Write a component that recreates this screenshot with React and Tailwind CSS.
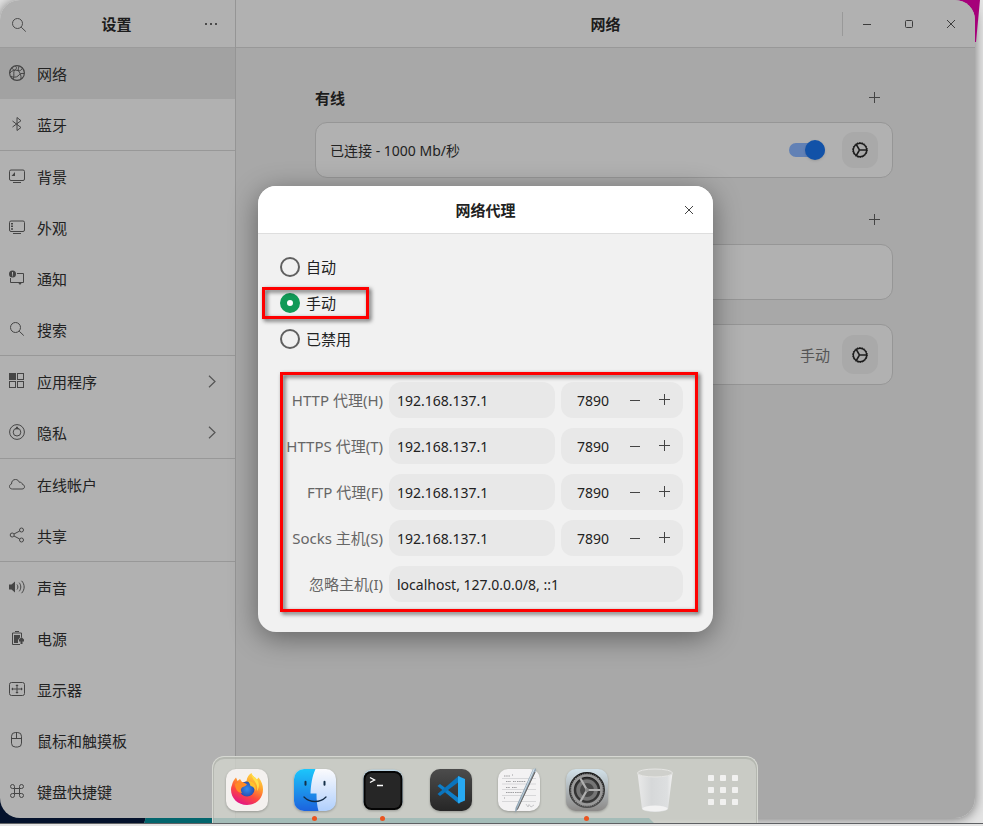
import React from "react";

const FONT = "font-['Noto_Sans','Noto_Sans_CJK_SC',sans-serif]";

function Icon({ children, size = 16, className = "", sw = 1 }) {
  return (
    <svg
      width={size}
      height={size}
      viewBox="0 0 16 16"
      fill="none"
      stroke="currentColor"
      strokeWidth={sw}
      className={"shrink-0 " + className}
      aria-hidden="true"
    >
      {children}
    </svg>
  );
}

const SearchIcon = () => (
  <Icon>
    <circle cx="6.5" cy="6.5" r="5" />
    <path d="M10.2 10.2 14.8 14.6" />
  </Icon>
);

const ICONS = {
  network: (
    <Icon>
      <circle cx="8" cy="8" r="7.4" strokeWidth="1.2" />
      <path d="M6.2 1C8 2 8 4 5.5 5.200C4 7 5.500 10 4.500 13.800M1 8C2.500 5.500 6 4.500 9 5.500C11 7 12.500 11 12 14M10 1.200C9.500 3 9.300 4.500 9 5.500M9 5.500C11 6.500 13 4.500 13.500 3M15 8.500C12 8 10.500 9 9 11C7.500 12.500 4 12.500 2 11.200M3 3C3.500 4.500 4.500 5 5.500 5.200" />
    </Icon>
  ),
  bluetooth: (
    <Icon>
      <path d="M3.500 5 12 11.500 8 14.500V1.500L12 4.700 3.500 11" />
    </Icon>
  ),
  background: (
    <Icon>
      <rect x="0.500" y="2" width="15" height="10.500" rx="1.500" />
      <path d="M4 14.500H12" />
      <path d="M2.500 8 6 4V8Z" fill="currentColor" stroke="none" />
    </Icon>
  ),
  appearance: (
    <Icon>
      <rect x="0.500" y="2" width="15" height="10.500" rx="1.500" />
      <path d="M4 14.500H12" />
      <path d="M2 4H4V5.500H2ZM2 6.600H4V8.100H2ZM2 9.200H4V10.700H2Z" fill="currentColor" stroke="none" />
    </Icon>
  ),
  notify: (
    <Icon>
      <path d="M8 3.500H14.500V12.500H1.500V8" />
      <path d="M9 12.500H13L11 15Z" fill="currentColor" stroke="none" />
      <circle cx="3.500" cy="4" r="3.500" fill="currentColor" stroke="none" />
      <path d="M3.500 2V4.800M3.500 5.300V6.300" stroke="#b1b1b1" />
    </Icon>
  ),
  search: <SearchIcon />,
  apps: (
    <Icon>
      <rect x="0.500" y="0.500" width="6" height="6" fill="currentColor" />
      <rect x="8.500" y="0.500" width="6" height="6" />
      <rect x="0.500" y="8.500" width="6" height="6" />
      <rect x="8.500" y="8.500" width="6" height="6" />
    </Icon>
  ),
  privacy: (
    <Icon>
      <circle cx="8" cy="8" r="7.400" />
      <circle cx="8" cy="8.200" r="3.800" />
      <path d="M6.500 4.800 8 2.800 9.500 4.800Z" fill="currentColor" />
    </Icon>
  ),
  cloud: (
    <Icon>
      <path d="M3.500 13C1.600 13 0.500 12 0.500 10.500C0.500 9 1.500 8.200 2.500 8C2.500 5 4.200 3.500 6.500 3.500C8.500 3.500 9.600 4.600 10.200 6.200C12 6 13.200 7 13.400 8.400C14.700 8.700 15.500 9.500 15.500 10.800C15.500 12.200 14.500 13 13 13Z" />
    </Icon>
  ),
  share: (
    <Icon>
      <circle cx="3.200" cy="8" r="2" />
      <circle cx="12.500" cy="3" r="2" />
      <circle cx="12.500" cy="13" r="2" />
      <path d="M5 7 10.700 4M5 9 10.700 12" />
    </Icon>
  ),
  sound: (
    <Icon>
      <path d="M0 5.500H2.500L6 2.500V13.500L2.500 10.500H0Z" fill="currentColor" stroke="none" />
      <path d="M8 5.500C9.200 7 9.200 9 8 10.500M10.200 3.700C12.300 6.200 12.300 9.800 10.200 12.300M12.600 1.800C16 5.500 16 10.500 12.600 14.200" />
    </Icon>
  ),
  power: (
    <Icon>
      <path d="M11 14.500H3.500V3H12.500V7" />
      <path d="M6 1.500H10" />
      <path d="M5 5H11V7.500L9 10V13H5Z" fill="currentColor" stroke="none" />
      <path d="M10 9.500 12.500 7 15 9.500V11.500H13.500V14H11.500V11.500H10Z" fill="currentColor" stroke="none" />
    </Icon>
  ),
  display: (
    <Icon>
      <rect x="0.500" y="1.500" width="15" height="13" rx="2" />
      <path d="M8 3.500V12.500M2.500 8H13.500M6.800 4.500H9.200M6.800 11.500H9.200M3.500 6.800V9.200M12.500 6.800V9.200" />
    </Icon>
  ),
  mouse: (
    <Icon>
      <rect x="2.500" y="0.500" width="10" height="14.500" rx="3.800" />
      <path d="M2.500 6.500H12.500M7.500 0.500V6.500" />
    </Icon>
  ),
  keyboard: (
    <Icon>
      <path d="M5.500 5.500H10.500V10.500H5.500ZM5.500 5.500H3.500A2 2 0 1 1 5.500 3.500ZM10.500 5.500V3.500A2 2 0 1 1 12.500 5.500ZM10.500 10.500H12.500A2 2 0 1 1 10.500 12.500ZM5.500 10.500V12.500A2 2 0 1 1 3.500 10.500Z" />
    </Icon>
  ),
};

const GROUPS = [
  [
    ["network", "网络"],
    ["bluetooth", "蓝牙"],
  ],
  [
    ["background", "背景"],
    ["appearance", "外观"],
    ["notify", "通知"],
    ["search", "搜索"],
  ],
  [
    ["apps", "应用程序", true],
    ["privacy", "隐私", true],
  ],
  [
    ["cloud", "在线帐户"],
    ["share", "共享"],
  ],
  [
    ["sound", "声音"],
    ["power", "电源"],
    ["display", "显示器"],
    ["mouse", "鼠标和触摸板"],
    ["keyboard", "键盘快捷键"],
  ],
];

function Sidebar() {
  return (
    <aside className="flex w-[236px] shrink-0 flex-col border-r border-[#959595] bg-[#b1b1b1]">
      <div className="flex h-12 items-center border-b border-[#9b9b9b] pt-0.5 pr-2">
        <button aria-label="搜索" className="flex h-9 w-[38px] items-center justify-center text-[#4a4a4a]">
          <SearchIcon />
        </button>
        <h1 className="flex-1 text-center text-[15px] font-bold text-[#1c1c1c]">设置</h1>
        <button aria-label="菜单" className="flex h-9 w-8 items-center justify-center text-[#4a4a4a]">
          <Icon>
            <path d="M2 6H4V8H2ZM7 6H9V8H7ZM12 6H14V8H12Z" fill="currentColor" stroke="none" />
          </Icon>
        </button>
      </div>
      <nav>
        {GROUPS.map((group, g) => (
          <ul key={g} className="border-b border-[#989898] last:border-b-0">
            {group.map(([icon, label, more]) => (
              <li key={icon}>
                <a
                  href="#"
                  className={
                    "flex h-[51px] items-center gap-3 pr-[15px] pl-[9px] text-[15px] text-[#222] " +
                    (icon === "network" ? "bg-[#a2a2a2]" : "")
                  }
                >
                  <span className="pb-0.5 text-[#454545]">{ICONS[icon]}</span>
                  <span className="flex-1 pt-0.5">{label}</span>
                  {more && (
                    <Icon className="text-[#555]" sw={1.2}>
                      <path d="M5 1.700 11 7.500 5 13.300" />
                    </Icon>
                  )}
                </a>
              </li>
            ))}
          </ul>
        ))}
      </nav>
    </aside>
  );
}

function GearButton({ tall }) {
  return (
    <button
      aria-label="选项"
      className={
        "flex w-9 items-center justify-center rounded-xl bg-[#a9a9a9] text-[#1c1c1c] " + (tall ? "h-[39px]" : "h-9")
      }
    >
      <Icon>
        <circle cx="8" cy="8" r="6.700" strokeWidth="1.400" />
        <circle cx="8" cy="8" r="7.400" strokeWidth="1" strokeDasharray="1.400 1.200" />
        <path d="M7.500 8H14.500M7.500 8 4.300 2.500M7.500 8 4.300 13.500" strokeWidth="1.500" />
      </Icon>
    </button>
  );
}

function AddButton() {
  return (
    <button aria-label="添加" className="flex h-9 w-9 items-center justify-center text-[#444]">
      <Icon>
        <path d="M7.500 2V13M2 7.500H13" />
      </Icon>
    </button>
  );
}

function Content() {
  return (
    <section className="flex flex-1 flex-col bg-[#a8a8a8]">
      <header className="grid h-12 grid-cols-[1fr_auto_1fr] items-center border-b border-[#989898] bg-[#b1b1b1]">
        <span />
        <h2 className="pt-0.5 text-[15px] font-bold text-[#1c1c1c]">网络</h2>
        <div className="flex items-center justify-end pr-[3px] text-[#3c3c3c]">
          <span className="mr-[3px] h-6 w-px bg-[#999]" />
          <button aria-label="最小化" className="flex h-9 w-[42px] items-center justify-center">
            <Icon>
              <path d="M4 8.500H12" />
            </Icon>
          </button>
          <button aria-label="最大化" className="flex h-9 w-[42px] items-center justify-center">
            <Icon>
              <rect x="4.500" y="4.500" width="7" height="7" rx="1" />
            </Icon>
          </button>
          <button aria-label="关闭" className="flex h-9 w-[42px] items-center justify-center">
            <Icon>
              <path d="M4 4 12 12M12 4 4 12" />
            </Icon>
          </button>
        </div>
      </header>
      <div className="flex justify-center pt-8 pr-[3px]">
        <div className="w-[578px]">
          <div className="flex h-9 items-center justify-between">
            <h3 className="text-[15px] font-bold text-[#1c1c1c]">有线</h3>
            <AddButton />
          </div>
          <div className="mt-1.5 flex h-14 items-center rounded-xl border border-[#969696] bg-[#b1b1b1] px-3.5">
            <label htmlFor="wired" className="flex-1 text-[14px] text-[#222]">
              已连接 - 1000 Mb/秒
            </label>
            <input
              id="wired"
              type="checkbox"
              role="switch"
              defaultChecked
              className="relative mr-[17px] h-5 w-9 appearance-none before:absolute before:top-[3px] before:left-0 before:h-3.5 before:w-9 before:rounded-full before:bg-[#6281b5] after:absolute after:top-0 after:right-0 after:h-5 after:w-5 after:rounded-full after:bg-[#1252a8] after:shadow-sm"
            />
            <GearButton />
          </div>
          <div className="mt-6 flex h-9 items-center justify-end">
            <AddButton />
          </div>
          <div className="mt-1.5 h-14 rounded-xl border border-[#969696] bg-[#b1b1b1]" />
          <div className="mt-6 flex h-[61px] items-center justify-end gap-3 rounded-xl border border-[#969696] bg-[#b1b1b1] px-3.5">
            <span className="pt-0.5 text-[15px] text-[#555]">手动</span>
            <GearButton tall />
          </div>
        </div>
      </div>
    </section>
  );
}

const MODES = ["自动", "手动", "已禁用"];
const PROXIES = ["HTTP 代理(H)", "HTTPS 代理(T)", "FTP 代理(F)", "Socks 主机(S)"];

const MARK =
  "pointer-events-none absolute border-3 border-[#fe0000] drop-shadow-[2px_2px_2px_rgba(0,0,0,0.65)]";

function ProxyDialog() {
  return (
    <div
      role="dialog"
      aria-label="网络代理"
      className="w-[455px] overflow-hidden rounded-[18px] bg-[#f1f1f1] pb-[30px] text-[#222] shadow-[0_6px_28px_rgba(0,0,0,0.42)]"
    >
      <header className="grid h-12 grid-cols-[1fr_auto_1fr] items-center border-b border-[#dedede] bg-white">
        <span />
        <h2 className="pt-0.5 text-[15px] font-bold">网络代理</h2>
        <button
          aria-label="关闭"
          className="mr-1.5 flex h-9 w-9 items-center justify-center justify-self-end text-[#444]"
        >
          <Icon>
            <path d="M4 4 12 12M12 4 4 12" />
          </Icon>
        </button>
      </header>
      <fieldset className="flex flex-col items-start px-[22px] pt-[15px]">
        {MODES.map((m, i) => (
          <label key={m} className="relative flex h-9 items-center gap-1.5 text-[15px]">
            <input
              type="radio"
              name="mode"
              defaultChecked={i === 1}
              className="h-5 w-5 appearance-none rounded-full border-2 border-[#606060] checked:border-[7px] checked:border-[#119a57] checked:bg-white"
            />
            <span>{m}</span>
            {i === 1 && <span className={MARK + " top-0.5 -left-[18px] h-8 w-[107px]"} />}
          </label>
        ))}
      </fieldset>
      <form className="relative mt-[25px] mr-[30px] ml-[22px] grid grid-cols-[1fr_166px_122px] gap-x-1.5 gap-y-2.5">
        {PROXIES.map((label, i) => (
          <React.Fragment key={label}>
            <label
              htmlFor={"host" + i}
              className="flex h-9 items-center justify-end text-[15px] whitespace-nowrap text-[#666]"
            >
              {label}
            </label>
            <input
              id={"host" + i}
              defaultValue="192.168.137.1"
              className="h-9 w-full rounded-xl bg-[#e8e8e8] px-2 text-[14px]"
            />
            <div className="flex h-9 items-center rounded-xl bg-[#e8e8e8] pr-1 text-[#444]">
              <input
                aria-label="端口"
                defaultValue="7890"
                className="w-[59px] pl-4 text-[14px] text-[#222]"
              />
              <button type="button" aria-label="减少" className="flex h-9 w-[30px] items-center justify-center">
                <Icon>
                  <path d="M3 8.500H13" />
                </Icon>
              </button>
              <button type="button" aria-label="增加" className="flex h-9 w-[29px] items-center justify-center">
                <Icon>
                  <path d="M7.500 2V13M2 7.500H13" />
                </Icon>
              </button>
            </div>
          </React.Fragment>
        ))}
        <label htmlFor="ignore" className="flex h-9 items-center justify-end text-[15px] text-[#666]">
          忽略主机(I)
        </label>
        <input
          id="ignore"
          defaultValue="localhost, 127.0.0.0/8, ::1"
          className="col-span-2 h-9 w-full rounded-xl bg-[#e8e8e8] px-2 text-[14px]"
        />
        <span className={MARK + " -inset-y-2.5 -right-[15px] left-0"} />
      </form>
    </div>
  );
}

const teeth = Array.from({ length: 48 }, (_, i) => i * 7.5);
const dots = [0, 1, 2].flatMap((r) => [0, 1, 2].map((c) => [6 + c * 12, 6 + r * 12]));

const APPS = [
  {
    name: "Firefox",
    art: (
      <>
        <defs>
          <linearGradient id="ffa" x1="0.8" y1="0" x2="0.3" y2="1">
            <stop offset="0" stopColor="#ffe14a" />
            <stop offset="0.35" stopColor="#ffa02c" />
            <stop offset="0.65" stopColor="#ff4a3d" />
            <stop offset="1" stopColor="#e0128a" />
          </linearGradient>
          <radialGradient id="ffb">
            <stop offset="0" stopColor="#2f8df0" />
            <stop offset="1" stopColor="#2a4fb0" />
          </radialGradient>
        </defs>
        <rect width="42" height="42" rx="10" fill="#f4f1ef" />
        <path
          d="M6 16C6.500 13 8 11 10 8.500L11.500 12L14 10L16 13C18 13 19 13 20.500 12C21 8 23 5.500 25.500 4C26 7 29 8 31 10.500L32.500 8.500C35.500 12 37 16 37 20.500C37 29.500 30 36 21 36C12 36 5 29.500 5 20.500C5 19 5.300 17.500 6 16Z"
          fill="url(#ffa)"
        />
        <circle cx="21" cy="20" r="7.500" fill="url(#ffb)" />
        <path d="M9 15C13 12.500 18 13 21 15.500C19.500 17.500 17 17.500 16 18.500C14.500 20 14.500 22 16 24C12 24 9 20 9 15Z" fill="#ff8a26" />
        <path d="M25.500 4C25 11 33 13 31 22C34 18 33 13 31 10.500C29 8 26 7 25.500 4Z" fill="#ffe14a" />
        <path d="M22 12C27 12 31 16 29.500 22C28.500 19 27 17.500 24.500 17C24 15 23 13.500 22 12Z" fill="#ffc22e" />
      </>
    ),
  },
  {
    name: "文件",
    running: true,
    art: (
      <>
        <defs>
          <linearGradient id="fia" x1="0" y1="0" x2="0" y2="1">
            <stop offset="0" stopColor="#1cc6fb" />
            <stop offset="1" stopColor="#1c62dd" />
          </linearGradient>
          <linearGradient id="fib" x1="0" y1="0" x2="0" y2="1">
            <stop offset="0" stopColor="#fbfbfd" />
            <stop offset="1" stopColor="#b0cffc" />
          </linearGradient>
        </defs>
        <rect width="42" height="42" rx="10" fill="url(#fib)" />
        <path d="M10 0H21.500C18 8 17 15 16.500 24.500H22.500C22.500 31 23 37 24.500 42H10A10 10 0 0 1 0 32V10A10 10 0 0 1 10 0Z" fill="url(#fia)" />
        <path d="M11.500 12.800V15.800M30.500 12.800V15.800" stroke="#153049" strokeWidth="2" strokeLinecap="round" />
        <path d="M10 28C16 34 26 34 32 28" stroke="#132b44" strokeWidth="1.300" fill="none" strokeLinecap="round" />
      </>
    ),
  },
  {
    name: "终端",
    running: true,
    art: (
      <>
        <rect x="1" y="0.500" width="40" height="40" rx="9" fill="#bcd4e2" />
        <rect x="1.500" y="2" width="39" height="39" rx="8" fill="#050505" />
        <rect x="3.500" y="4" width="35" height="35" rx="6" fill="#262626" />
        <path d="M8 8.500 12.500 11 8 13.500M15 16.500H21" stroke="#fff" strokeWidth="1.400" fill="none" />
      </>
    ),
  },
  {
    name: "Visual Studio Code",
    art: (
      <>
        <defs>
          <linearGradient id="vsa" x1="0" y1="0" x2="0" y2="1">
            <stop offset="0" stopColor="#4c4c4c" />
            <stop offset="1" stopColor="#262626" />
          </linearGradient>
        </defs>
        <rect width="42" height="42" rx="10" fill="url(#vsa)" />
        <path d="M7.500 17 10 15 30 30V34.500L28 34Z" fill="#0f7fc9" />
        <path d="M7.500 25 10 27 30 12V7.500L28 7.500Z" fill="#0a74bd" />
        <path d="M28 7 35 10V31.500L28 34.500Z" fill="#27a9f2" />
      </>
    ),
  },
  {
    name: "文本编辑器",
    art: (
      <>
        <rect width="42" height="42" rx="10" fill="#f3f2f3" />
        <path d="M4 9.500H38M4 15H38M4 20.500H38M4 26.500H38M4 32.500H38" stroke="#cfcfd2" strokeWidth="0.800" />
        <path d="M6 7H12M14 6H15M8 12.500H13M15 12.500H18M19 12.500H28M8 18.500H12M14 18.500H19M8 23.500H16M17 23.500H24M6 29H7" stroke="#9c9c9f" strokeWidth="1" strokeDasharray="1.500 0.700" />
        <path d="M28 35 30 38 31 35.500 33 38 36 36" stroke="#b5b5b8" strokeWidth="0.700" fill="none" />
        <path d="M35 0 38 -0.500 37.500 3 20 40 17 43.500 17.500 39Z" fill="#8fa3b2" />
        <path d="M35.500 0 37 -0.500 19.500 38 18 41Z" fill="#d6e4ee" />
        <path d="M37.500 3 20 40 18.500 41.500 36.500 3Z" fill="#665d58" />
      </>
    ),
  },
  {
    name: "设置",
    running: true,
    art: (
      <>
        <defs>
          <linearGradient id="sea" x1="0" y1="0" x2="0" y2="1">
            <stop offset="0" stopColor="#d2e1e9" />
            <stop offset="1" stopColor="#8b8987" />
          </linearGradient>
          <linearGradient id="seb" x1="0" y1="0" x2="0" y2="1">
            <stop offset="0" stopColor="#161616" />
            <stop offset="1" stopColor="#4d4d4d" />
          </linearGradient>
        </defs>
        <rect width="42" height="42" rx="10" fill="url(#sea)" />
        <circle cx="21" cy="21" r="18" fill="url(#seb)" />
        <circle cx="21" cy="21" r="14.500" fill="none" stroke="#9a9a9a" strokeWidth="2.500" />
        {teeth.map((a) => (
          <path key={a} d="M21 4.300V6.500" stroke="#9a9a9a" strokeWidth="1" transform={`rotate(${a} 21 21)`} />
        ))}
        <circle cx="21" cy="21" r="11.500" fill="#757575" stroke="#333" strokeWidth="1.500" />
        <circle cx="21" cy="21" r="7" fill="#484848" />
        <path d="M21 21H34.500M21 21 14.300 9.300M21 21 14.300 32.700" stroke="#b0b0b0" strokeWidth="2.200" />
        <circle cx="21" cy="21" r="2" fill="#888" />
      </>
    ),
  },
  {
    name: "回收站",
    flat: true,
    art: (
      <>
        <defs>
          <linearGradient id="tra" x1="0" y1="0" x2="1" y2="0">
            <stop offset="0" stopColor="#e9e9e9" />
            <stop offset="0.4" stopColor="#d6d8d9" />
            <stop offset="0.85" stopColor="#dddfe0" />
            <stop offset="1" stopColor="#f2f2f2" />
          </linearGradient>
        </defs>
        <path d="M3.500 4C6 9 36 9 38.500 4L34 40C31 44 11 44 8 40Z" fill="url(#tra)" />
        <ellipse cx="21" cy="4" rx="17.500" ry="4" fill="#cfd0cc" stroke="#e6e6e4" strokeWidth="1" />
        <ellipse cx="21" cy="39.500" rx="12.500" ry="3" fill="#f2f2f2" />
      </>
    ),
  },
  {
    name: "显示应用",
    flat: true,
    art: (
      <>
        {dots.map(([x, y]) => (
          <rect key={x + "-" + y} x={x} y={y} width="6" height="6" rx="0.800" fill="#f1f1f0" />
        ))}
      </>
    ),
  },
];

function Dock() {
  return (
    <div className="flex h-[67px] items-start gap-[26px] rounded-t-xl border border-b-0 border-[#d6d8d2] bg-[#d2d5cd]/78 px-[13px] pt-3 shadow-[inset_0_1px_0_1px_rgba(160,163,156,0.5)]">
      {APPS.map((app) => (
        <button key={app.name} aria-label={app.name} className="flex flex-col items-center gap-[5px]">
          <svg
            width="42"
            height="42"
            viewBox="0 0 42 42"
            className={"overflow-visible " + (app.flat ? "" : "drop-shadow-[0_1px_1px_rgba(0,0,0,0.25)]")}
            aria-hidden="true"
          >
            {app.art}
          </svg>
          {app.running && <span className="h-[5px] w-[5px] rounded-full bg-[#ea5420]" />}
        </button>
      ))}
    </div>
  );
}

export default function App() {
  return (
    <div className={FONT + " relative flex min-h-screen flex-col overflow-hidden bg-[#e4e4e4]"}>
      <div className="relative mr-2 flex flex-1 rounded-[20px] shadow-[0_1px_12px_rgba(0,0,0,0.5)]">
        <svg width="660" height="30" className="absolute -bottom-1.5 left-0" aria-hidden="true">
          <path d="M0 0H152L144 30H0Z" fill="#04122c" />
          <path d="M152 0 144 30H655L643 18V0Z" fill="#03656d" />
        </svg>
        <svg width="34" height="42" className="absolute top-0 -right-2" aria-hidden="true">
          <path d="M0 0H31L27 42H24L0 20Z" fill="#a6007a" />
        </svg>
        <div className="relative flex flex-1 overflow-hidden rounded-[20px]">
          <Sidebar />
          <Content />
          <div className="absolute inset-0 flex items-center justify-center pr-1">
            <ProxyDialog />
          </div>
        </div>
      </div>
      <div className="h-[5px]" />
      <div className="relative h-px bg-[#5f6164]" />
      <div className="relative h-0.5 bg-[#e5e5e5]" />
      <div className="absolute inset-x-0 bottom-[3px] flex justify-center pr-3.5">
        <Dock />
      </div>
    </div>
  );
}
